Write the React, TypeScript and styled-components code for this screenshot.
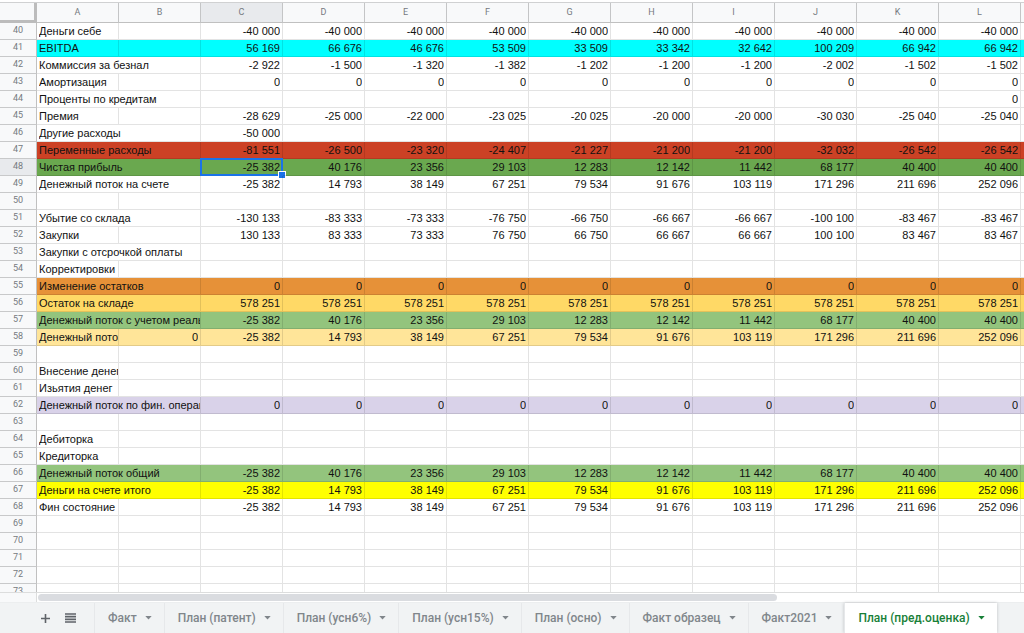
import React from 'react';
import styled, { createGlobalStyle } from 'styled-components';

const GlobalStyle = createGlobalStyle`
  * { box-sizing: border-box; }
  html, body { margin: 0; padding: 0; }
  body {
    background: #fff;
    font-family: "Liberation Sans", Arial, sans-serif;
    overflow: hidden;
  }
`;

const COLUMNS = ['A', 'B', 'C', 'D', 'E', 'F', 'G', 'H', 'I', 'J', 'K', 'L', ''];
const VALUE_COUNT = 10;
const ACTIVE_COLUMN = 'C';
const ACTIVE_ROW = 48;

type RowData = {
  label?: string;
  spill?: boolean;
  second?: string;
  values?: string[];
  color?: string;
};

const fill = (value: string) => Array<string>(VALUE_COUNT).fill(value);
const list = (text: string) => text.split('|');

const PROFIT = list('-25 382|40 176|23 356|29 103|12 283|12 142|11 442|68 177|40 400|40 400');
const CASH = list('-25 382|14 793|38 149|67 251|79 534|91 676|103 119|171 296|211 696|252 096');

const ROWS: Record<number, RowData> = {
  40: { label: 'Деньги себе', values: fill('-40 000') },
  41: {
    label: 'EBITDA',
    color: '#00ffff',
    values: list('56 169|66 676|46 676|53 509|33 509|33 342|32 642|100 209|66 942|66 942'),
  },
  42: {
    label: 'Коммиссия за безнал',
    spill: true,
    values: list('-2 922|-1 500|-1 320|-1 382|-1 202|-1 200|-1 200|-2 002|-1 502|-1 502'),
  },
  43: { label: 'Амортизация', values: fill('0') },
  44: { label: 'Проценты по кредитам', spill: true, values: list('|||||||||0') },
  45: {
    label: 'Премия',
    values: list('-28 629|-25 000|-22 000|-23 025|-20 025|-20 000|-20 000|-30 030|-25 040|-25 040'),
  },
  46: { label: 'Другие расходы', spill: true, values: list('-50 000|||||||||') },
  47: {
    label: 'Переменные расходы',
    spill: true,
    color: '#cc4125',
    values: list('-81 551|-26 500|-23 320|-24 407|-21 227|-21 200|-21 200|-32 032|-26 542|-26 542'),
  },
  48: { label: 'Чистая прибыль', spill: true, color: '#6aa84f', values: PROFIT },
  49: { label: 'Денежный поток на счете', spill: true, values: CASH },
  51: {
    label: 'Убытие со склада',
    spill: true,
    values: list('-130 133|-83 333|-73 333|-76 750|-66 750|-66 667|-66 667|-100 100|-83 467|-83 467'),
  },
  52: {
    label: 'Закупки',
    values: list('130 133|83 333|73 333|76 750|66 750|66 667|66 667|100 100|83 467|83 467'),
  },
  53: { label: 'Закупки с отсрочкой оплаты', spill: true },
  54: { label: 'Корректировки' },
  55: { label: 'Изменение остатков', spill: true, color: '#e69138', values: fill('0') },
  56: { label: 'Остаток на складе', spill: true, color: '#ffd966', values: fill('578 251') },
  57: {
    label: 'Денежный поток с учетом реаль',
    spill: true,
    color: '#93c47d',
    values: PROFIT,
  },
  58: { label: 'Денежный поток', second: '0', color: '#ffe599', values: CASH },
  60: { label: 'Внесение денег' },
  61: { label: 'Изьятия денег' },
  62: {
    label: 'Денежный поток по фин. операц',
    spill: true,
    color: '#d9d2e9',
    values: fill('0'),
  },
  64: { label: 'Дебиторка' },
  65: { label: 'Кредиторка' },
  66: { label: 'Денежный поток общий', spill: true, color: '#93c47d', values: PROFIT },
  67: { label: 'Деньги на счете итого', spill: true, color: '#ffff00', values: CASH },
  68: { label: 'Фин состояние', values: CASH },
};

const ROW_NUMBERS = Array.from({ length: 34 }, (_, i) => 40 + i);

const SHEETS = [
  'Факт',
  'План (патент)',
  'План (усн6%)',
  'План (усн15%)',
  'План (осно)',
  'Факт образец',
  'Факт2021',
  'План (пред.оценка)',
];
const ACTIVE_SHEET = 'План (пред.оценка)';

const Page = styled.div`
  display: flex;
  flex-direction: column;
  height: 100vh;
  overflow: hidden;
`;

const GridPane = styled.main`
  flex: 1;
  min-height: 0;
  margin-top: 2px;
  overflow: hidden;
  border-top: 1px solid #d0d1d2;
  border-bottom: 1px solid #dcdddd;
`;

const Grid = styled.table`
  width: 1103px;
  table-layout: fixed;
  border-collapse: separate;
  border-spacing: 0;
  font-size: 11px;
  line-height: 16px;
  color: #111;
`;

const NumberCol = styled.col`
  width: 37px;
`;

const DataCol = styled.col`
  width: 82px;
`;

const Corner = styled.td`
  height: 20px;
  padding: 0;
  background: #f8f9fa;
  border-right: 3px solid #bcbcbc;
  border-bottom: 3px solid #bcbcbc;
`;

const ColumnHead = styled.th<{ $active: boolean }>`
  height: 20px;
  padding: 0;
  background: ${(p) => (p.$active ? '#e8eaed' : '#f8f9fa')};
  border-right: 1px solid #c4c5c6;
  border-bottom: 1px solid #c0c0c0;
  font: 400 9px/19px Roboto, sans-serif;
  color: #757980;
`;

const RowHead = styled.th<{ $active: boolean }>`
  height: 17px;
  padding: 0 0 2px;
  background: ${(p) => (p.$active ? '#e8eaed' : '#f8f9fa')};
  border-right: 1px solid #c0c0c0;
  border-bottom: 1px solid #c8c9ca;
  font: 400 9px/14px Roboto, sans-serif;
  color: #757980;
`;

const Row = styled.tr<{ $color?: string }>`
  background: ${(p) => p.$color ?? '#fff'};
`;

const Cell = styled.td<{ $numeric?: boolean }>`
  position: relative;
  height: 17px;
  padding: ${(p) => (p.$numeric ? '0 2px 0 0' : '0 0 0 2px')};
  border-right: 1px solid rgba(0, 0, 0, 0.11);
  border-bottom: 1px solid rgba(0, 0, 0, 0.11);
  text-align: ${(p) => (p.$numeric ? 'right' : 'left')};
  white-space: nowrap;
`;

const CellText = styled.div`
  height: 16px;
  overflow: hidden;
`;

const Selection = styled.div`
  position: absolute;
  inset: -1px;
  border: 2px solid #1a73e8;

  &::after {
    content: '';
    position: absolute;
    right: -4px;
    bottom: -4px;
    width: 6px;
    height: 6px;
    background: #1a73e8;
    outline: 1px solid #fff;
  }
`;

const ScrollRow = styled.div`
  display: flex;
  height: 9px;
`;

const ScrollCorner = styled.div`
  width: 37px;
  background: #f8f9fa;
  border-right: 1px solid #dcdddd;
`;

const ScrollTrack = styled.div`
  flex: 1;
  padding: 1px;
`;

const ScrollThumb = styled.div`
  width: 75%;
  height: 7px;
  border-radius: 4px;
  background: #dadce0;
`;

const SheetBar = styled.nav`
  display: flex;
  height: 31px;
  padding-left: 33px;
  background: #f1f3f4;
  border-top: 1px solid #eceeef;
`;

const Tools = styled.div`
  display: flex;
  width: 61px;
`;

const ToolButton = styled.button`
  display: flex;
  align-items: center;
  justify-content: center;
  width: 25px;
  padding: 0;
  border: 0;
  background: none;
  color: #5f6368;
`;

const SheetTab = styled.button<{ $active: boolean }>`
  display: flex;
  align-items: center;
  gap: 8px;
  padding: 0 12px 0 13px;
  border: 0;
  border-left: 1px solid #e6e8ea;
  background: ${(p) => (p.$active ? '#fff' : 'transparent')};
  box-shadow: ${(p) => (p.$active ? '0 0 3px rgba(60, 64, 67, 0.28)' : 'none')};
  font: 500 12px/16px Roboto, sans-serif;
  color: ${(p) => (p.$active ? '#188038' : '#80868b')};
  white-space: nowrap;
`;

const Arrow = () => (
  <svg width="7" height="4" viewBox="0 0 7 4" aria-hidden="true">
    <path d="M0.3 0h6.4L3.5 3.6z" fill="currentColor" />
  </svg>
);

const PlusIcon = () => (
  <svg width="9" height="9" viewBox="0 0 9 9" aria-hidden="true">
    <path d="M4.5 0v9M0 4.5h9" stroke="currentColor" strokeWidth="1.6" />
  </svg>
);

const ListIcon = () => (
  <svg width="11" height="10" viewBox="0 0 11 10" aria-hidden="true">
    <path d="M0 1h11M0 3.6h11M0 6.3h11M0 9h11" stroke="currentColor" strokeWidth="1.7" />
  </svg>
);

function SheetRow({ number }: { number: number }) {
  const { label, spill, second, values = fill(''), color } = ROWS[number] ?? {};
  return (
    <Row $color={color}>
      <RowHead scope="row" $active={number === ACTIVE_ROW}>
        {number}
      </RowHead>
      <Cell colSpan={spill ? 2 : 1}>
        <CellText>{label}</CellText>
      </Cell>
      {!spill && (
        <Cell $numeric>
          <CellText>{second}</CellText>
        </Cell>
      )}
      {values.map((value, i) => (
        <Cell key={i} $numeric>
          <CellText>{value}</CellText>
          {number === ACTIVE_ROW && COLUMNS[i + 2] === ACTIVE_COLUMN && <Selection />}
        </Cell>
      ))}
      <Cell />
    </Row>
  );
}

export default function App() {
  return (
    <Page>
      <GlobalStyle />
      <GridPane>
        <Grid>
          <colgroup>
            <NumberCol />
            {COLUMNS.map((name) => (
              <DataCol key={name} />
            ))}
          </colgroup>
          <thead>
            <tr>
              <Corner />
              {COLUMNS.map((name) => (
                <ColumnHead key={name} scope="col" $active={name === ACTIVE_COLUMN}>
                  {name}
                </ColumnHead>
              ))}
            </tr>
          </thead>
          <tbody>
            {ROW_NUMBERS.map((number) => (
              <SheetRow key={number} number={number} />
            ))}
          </tbody>
        </Grid>
      </GridPane>
      <ScrollRow>
        <ScrollCorner />
        <ScrollTrack>
          <ScrollThumb />
        </ScrollTrack>
      </ScrollRow>
      <SheetBar>
        <Tools>
          <ToolButton aria-label="Добавить лист">
            <PlusIcon />
          </ToolButton>
          <ToolButton aria-label="Все листы">
            <ListIcon />
          </ToolButton>
        </Tools>
        {SHEETS.map((name) => (
          <SheetTab key={name} $active={name === ACTIVE_SHEET}>
            {name}
            <Arrow />
          </SheetTab>
        ))}
      </SheetBar>
    </Page>
  );
}
